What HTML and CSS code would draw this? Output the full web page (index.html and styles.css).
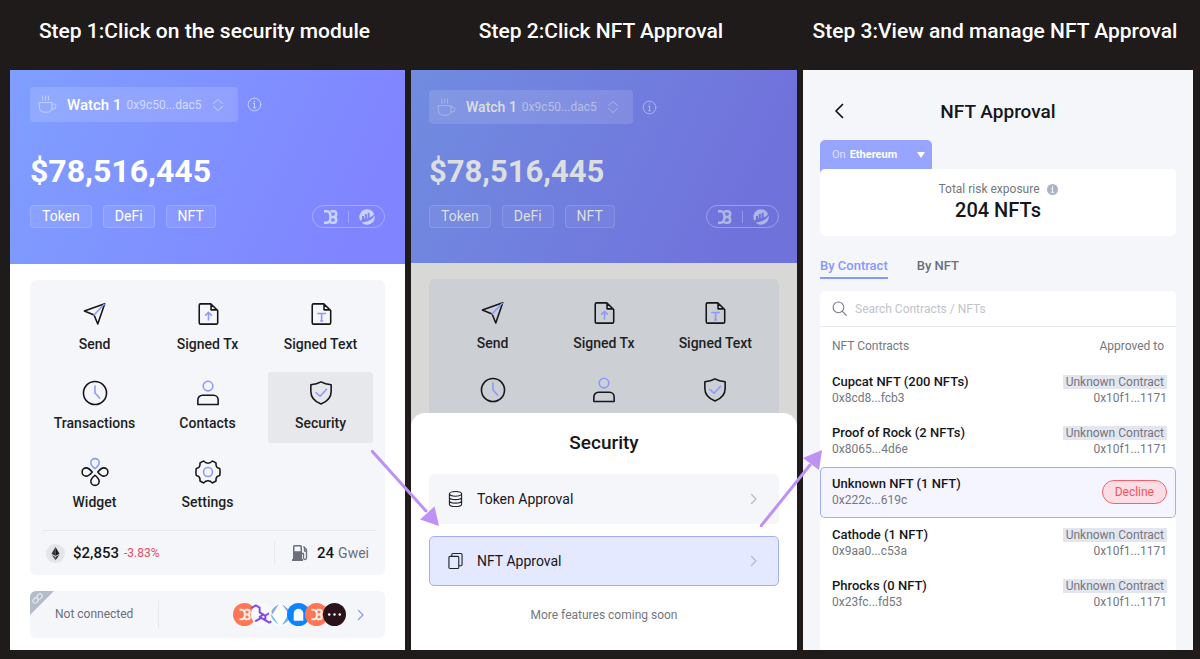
FILE: index.html
```html
<!DOCTYPE html>
<html lang="en">
<head>
    <meta charset="utf-8">
    <title>NFT Approval Guide</title>
    <link rel="stylesheet" href="styles.css">
</head>
<body>
    <!-- shared icons -->
    <svg class="sprite" width="0" height="0" aria-hidden="true">
        <symbol id="cup" viewBox="0 0 20 20"><path d="M1.500 8h13.200v5.500a4.500 4.500 0 0 1-4.500 4.500H6a4.500 4.500 0 0 1-4.500-4.500zM14.700 9.500h2.300a1.800 1.800 0 0 1 1.800 1.800v.7a2.800 2.800 0 0 1-2.800 2.800h-1.500M5 1c-1 1.500 1 2.500 0 4.500M8 1c-1 1.500 1 2.500 0 4.500M11 1c-1 1.500 1 2.500 0 4.500"/></symbol>
        <symbol id="updown" viewBox="0 0 12 14"><path d="M1.500 5.500 6 1.500l4.500 4M1.500 8.500l4.500 4 4.500-4"/></symbol>
        <symbol id="info" viewBox="0 0 16 16"><circle cx="8" cy="8" r="6.800"/><path d="M8 7v4.500M6.800 7H8M6.800 11.500h2.400M7.900 4.200v1"/></symbol>
        <symbol id="debank" viewBox="0 0 16 16"><path class="mark" d="M2 2.300h2.800C7.300 2.300 8.500 5 8.500 8s-1.200 5.700-3.700 5.700H2M8.500 2.300h3.200c3.300 0 3.300 5.200 0 5.700 3.300.5 3.300 5.700 0 5.700H8.500M8.500 8h3"/></symbol>
        <symbol id="chart" viewBox="0 0 16 16"><path fill="currentColor" stroke="none" d="M8 .3A7.700 7.700 0 0 0 1.500 12c.6-.6 1.100-1.200 1.500-1.900V7h2v2.300h.8V5h2v4.300h.8V3.700h2v4.800c2-.8 3.400-1.900 4.500-3.300A7.700 7.700 0 0 0 8 .3zM15.600 6.700C13 11.200 8.500 12.700 2.600 13.400A7.700 7.700 0 0 0 15.600 6.700z"/></symbol>
        <symbol id="send" viewBox="0 0 26 26"><path d="M1.500 9.700 23.500 1.800 16 23.800 12 14z"/><path class="hi" d="M12 14 23 2.500"/></symbol>
        <symbol id="tx" viewBox="0 0 26 26"><path d="M16 2H5a1.500 1.500 0 0 0-1.500 1.500v19A1.500 1.500 0 0 0 5 24h17a1.500 1.500 0 0 0 1.500-1.500V9.200zM16.300 2.300V8.500h6.500"/><path class="hi" d="M13.500 19.500v-8M10.300 14.300l3.200-3.200 3.200 3.200"/></symbol>
        <symbol id="text" viewBox="0 0 26 26"><path d="M16 2H5a1.500 1.500 0 0 0-1.500 1.500v19A1.500 1.500 0 0 0 5 24h17a1.500 1.500 0 0 0 1.500-1.500V9.200zM16.300 2.300V8.500h6.500"/><path class="hi" d="M9.500 12.500h8.400M13.700 12.500v8M12.700 20.500h2"/></symbol>
        <symbol id="clock" viewBox="0 0 26 26"><circle cx="13" cy="13" r="12.500"/><path class="hi" d="M13 5.500V13l5 5.500"/></symbol>
        <symbol id="contact" viewBox="0 0 26 26"><circle class="hi" cx="13" cy="5.500" r="5.200"/><path d="M2 25.500V20.500a5 5 0 0 1 5-5h12a5 5 0 0 1 5 5v5z"/></symbol>
        <symbol id="shield" viewBox="0 0 26 26"><path d="M13 1c3 1.700 7 2.700 11 3v7.500c0 6-4.500 11-11 13.500C6.500 22.500 2 17.500 2 11.500V4C6 3.700 10 2.700 13 1z"/><path class="hi" d="m7.500 12.500 4.500 4 7-7.500"/></symbol>
        <symbol id="widget" viewBox="0 0 26 26"><path class="hi" d="M13 9.500C10 7 8.500 5.500 8.500 3a4.500 4.500 0 0 1 9 0c0 2.500-1.500 4-4.500 6.500z"/><path d="M13 16.500c-3 2.500-4.500 4-4.500 6.500a4.500 4.500 0 0 0 9 0c0-2.500-1.500-4-4.500-6.500zM10 13C7.500 10 6 8.500 3.500 8.500a4.500 4.500 0 0 0 0 9c2.500 0 4-1.500 6.500-4.500zM16 13c2.500-3 4-4.500 6.500-4.500a4.500 4.500 0 0 1 0 9c-2.500 0-4-1.500-6.500-4.500z"/></symbol>
        <symbol id="gear" viewBox="0 0 26 26"><path d="M8.500 1.200c1.200 1.600 2.700 2.300 4.500 2.300s3.300-.7 4.500-2.300c1.700.5 3 1.200 4.200 2.200-.4 3.200 1 5.400 4 5.900.6 2.500.6 5 0 7.400-3 .5-4.400 2.700-4 5.900-1.200 1-2.500 1.700-4.200 2.200-1.200-1.600-2.700-2.300-4.500-2.300s-3.300.7-4.500 2.300c-1.700-.5-3-1.200-4.200-2.200.4-3.200-1-5.400-4-5.900-.6-2.500-.6-5 0-7.400 3-.5 4.400-2.700 4-5.900 1.200-1 2.500-1.700 4.200-2.200z"/><circle class="hi" cx="13" cy="13" r="4.800"/></symbol>
        <symbol id="next" viewBox="0 0 8 12"><path d="M1.500 1.500 6 6l-4.500 4.500"/></symbol>
    </svg>

    <main class="steps">
        <section class="step">
            <h2 class="step-title">Step 1:Click on the security module</h2>
            <div class="phone">
                <div class="hero">
                    <div class="account-row">
                        <button class="account">
                            <svg class="cup"><use href="#cup"/></svg>
                            <span class="account-name">Watch 1</span>
                            <span class="account-address">0x9c50...dac5</span>
                            <svg class="updown"><use href="#updown"/></svg>
                        </button>
                        <svg class="info"><use href="#info"/></svg>
                    </div>
                    <div class="balance">$78,516,445</div>
                    <div class="tags">
                        <button class="tag">Token</button>
                        <button class="tag">DeFi</button>
                        <button class="tag">NFT</button>
                        <div class="sources">
                            <svg><use href="#debank"/></svg>
                            <span class="bar"></span>
                            <svg><use href="#chart"/></svg>
                        </div>
                    </div>
                </div>
                <div class="home">
                    <div class="card">
                        <div class="tiles">
                            <button class="tile"><svg><use href="#send"/></svg>Send</button>
                            <button class="tile"><svg><use href="#tx"/></svg>Signed Tx</button>
                            <button class="tile"><svg><use href="#text"/></svg>Signed Text</button>
                            <button class="tile"><svg><use href="#clock"/></svg>Transactions</button>
                            <button class="tile"><svg><use href="#contact"/></svg>Contacts</button>
                            <button class="tile active"><svg><use href="#shield"/></svg>Security</button>
                            <button class="tile"><svg><use href="#widget"/></svg>Widget</button>
                            <button class="tile"><svg><use href="#gear"/></svg>Settings</button>
                        </div>
                        <div class="market">
                            <svg class="eth" viewBox="0 0 20 20"><circle cx="10" cy="10" r="10" fill="#e4e5ea"/><path fill="#343434" d="M10 3.200 5.800 10.200 10 12.700z"/><path fill="#1a1a1c" d="m10 3.200 4.200 7-4.200 2.500z"/><path fill="#55555a" d="M5.800 11.200 10 17v-3.300z"/><path fill="#222" d="M14.200 11.200 10 17v-3.300z"/></svg>
                            <span class="price">$2,853</span>
                            <span class="change">-3.83%</span>
                            <div class="gas">
                                <svg viewBox="0 0 16 16"><path fill="#6b6e7d" fill-rule="evenodd" d="M1 1.500A1.500 1.500 0 0 1 2.500 0h6A1.500 1.500 0 0 1 10 1.500V14h1v2H0v-2h1zM2.500 1.500v4.700h6V1.500z"/><path fill="none" stroke="#6b6e7d" stroke-width="1.300" d="M10 8.500h1.500v4.500a1.500 1.500 0 0 0 3 0V4.500L11.800 1.800M12.500 3v3h2"/></svg>
                                <b>24</b> Gwei
                            </div>
                        </div>
                    </div>
                    <div class="connect">
                        <svg class="corner" viewBox="0 0 25 25"><path fill="#b3bcc9" d="M0 0h25L0 25z"/><g fill="none" stroke="#e8ebf0" stroke-width="1.200" transform="rotate(-45 8 8)"><rect x="2" y="5.500" width="6" height="4.500" rx="2.200"/><rect x="8" y="5.500" width="6" height="4.500" rx="2.200"/></g></svg>
                        <span class="connect-state">Not connected</span>
                        <div class="coins">
                            <svg class="debank" viewBox="0 0 24 24"><circle cx="12" cy="12" r="12"/><use href="#debank" x="5" y="5" width="14" height="14"/></svg>
                            <svg viewBox="0 0 24 24"><circle cx="12" cy="12" r="12" fill="#f8f9fc"/><path fill="none" stroke="#8148e6" stroke-width="2" stroke-linejoin="round" d="M1 5 5 2.500l4 2.300v5l6 3.700M9 16.500l-3.800 2.200M15 18v-5l4-2.300 4 2.300v5L19 20.500 9 14.500l4-2.500"/></svg>
                            <svg viewBox="0 0 24 24"><circle cx="12" cy="12" r="12" fill="#fff"/><path fill="#8ea5ef" d="M10.500 1 3.500 12 2.500 9.500C2.500 6.500 5 4.500 10.500 1z"/><path fill="#79c5f3" d="M1.800 11c0 5 2.700 7.500 8.700 12L3.500 13z"/><path fill="#66b4f2" d="m13.500 23 7-11 1 2.500c0 3-2.500 5-8 8.500z"/><path fill="#8b91ea" d="M22.200 13c0-5-2.700-7.500-8.700-12l7 10z"/></svg>
                            <svg viewBox="0 0 24 24"><circle cx="12" cy="12" r="12" fill="#0a84ff"/><path fill="#fff" d="M7 18.500V11a5 5 0 0 1 10 0v7.500z"/></svg>
                            <svg class="debank" viewBox="0 0 24 24"><circle cx="12" cy="12" r="12"/><use href="#debank" x="5" y="5" width="14" height="14"/></svg>
                            <svg viewBox="0 0 24 24"><circle cx="12" cy="12" r="12" fill="#2b1419"/><g fill="#fff"><circle cx="6.500" cy="12" r="1.300"/><circle cx="12" cy="12" r="1.300"/><circle cx="17.500" cy="12" r="1.300"/></g></svg>
                        </div>
                        <svg class="next"><use href="#next"/></svg>
                    </div>
                </div>
            </div>
        </section>

        <section class="step">
            <h2 class="step-title">Step 2:Click NFT Approval</h2>
            <div class="phone dimmed">
                <div class="hero">
                    <div class="account-row">
                        <button class="account">
                            <svg class="cup"><use href="#cup"/></svg>
                            <span class="account-name">Watch 1</span>
                            <span class="account-address">0x9c50...dac5</span>
                            <svg class="updown"><use href="#updown"/></svg>
                        </button>
                        <svg class="info"><use href="#info"/></svg>
                    </div>
                    <div class="balance">$78,516,445</div>
                    <div class="tags">
                        <button class="tag">Token</button>
                        <button class="tag">DeFi</button>
                        <button class="tag">NFT</button>
                        <div class="sources">
                            <svg><use href="#debank"/></svg>
                            <span class="bar"></span>
                            <svg><use href="#chart"/></svg>
                        </div>
                    </div>
                </div>
                <div class="home">
                    <div class="card">
                        <div class="tiles">
                            <button class="tile"><svg><use href="#send"/></svg>Send</button>
                            <button class="tile"><svg><use href="#tx"/></svg>Signed Tx</button>
                            <button class="tile"><svg><use href="#text"/></svg>Signed Text</button>
                            <button class="tile"><svg><use href="#clock"/></svg></button>
                            <button class="tile"><svg><use href="#contact"/></svg></button>
                            <button class="tile"><svg><use href="#shield"/></svg></button>
                        </div>
                    </div>
                </div>
                <div class="sheet">
                    <h3>Security</h3>
                    <button class="option">
                        <svg viewBox="0 0 16 18"><ellipse cx="8" cy="3.500" rx="6.500" ry="2.500"/><path d="M1.500 3.500v11C1.500 16 4.400 17 8 17s6.500-1 6.500-2.500v-11M1.500 7.200c0 1.400 2.900 2.500 6.500 2.500s6.500-1.100 6.500-2.500M1.500 10.900c0 1.400 2.900 2.500 6.500 2.500s6.500-1.100 6.500-2.500"/></svg>
                        Token Approval
                        <svg class="next"><use href="#next"/></svg>
                    </button>
                    <button class="option selected">
                        <svg viewBox="0 0 16 18"><rect x="1" y="4" width="10.500" height="13" rx="1.200"/><path d="M4 3.500V2.200A1.200 1.200 0 0 1 5.200 1h8.600A1.200 1.200 0 0 1 15 2.200v10.600a1.200 1.200 0 0 1-1.200 1.200h-2"/></svg>
                        NFT Approval
                        <svg class="next"><use href="#next"/></svg>
                    </button>
                    <p>More features coming soon</p>
                </div>
                <svg class="arrow arrow-in" viewBox="0 0 68 76"><path stroke="#bd92f4" stroke-width="3" d="m1 1 54 60"/><path fill="#bd92f4" d="M68 76 49 69.500 63.500 56.500z"/></svg>
                <svg class="arrow arrow-out" viewBox="0 0 62 77"><path stroke="#bd92f4" stroke-width="3" d="M1 76 50 15"/><path fill="#bd92f4" d="M62 0 43 8l16 12z"/></svg>
            </div>
        </section>

        <section class="step">
            <h2 class="step-title">Step 3:View and manage NFT Approval</h2>
            <div class="phone approvals">
                <header class="bar-top">
                    <button class="back" aria-label="Back"><svg viewBox="0 0 10 16"><path d="M8.500 1.500 2 8l6.500 6.500"/></svg></button>
                    <h1>NFT Approval</h1>
                </header>
                <div class="network">
                    <label for="network">On</label>
                    <select id="network"><option>Ethereum</option></select>
                    <svg viewBox="0 0 8 6"><path d="M0 0h8L4 6z"/></svg>
                </div>
                <div class="risk">
                    <div class="risk-label">Total risk exposure
                        <svg viewBox="0 0 12 12"><circle cx="6" cy="6" r="6" fill="#a9b4c6"/><path stroke="#f2f5f9" d="M6 2.500v1.300M6 5v4M4.800 5.300H6M4.500 9h3"/></svg>
                    </div>
                    <div class="risk-total">204 NFTs</div>
                </div>
                <nav class="tabs">
                    <button class="tab active">By Contract</button>
                    <button class="tab">By NFT</button>
                </nav>
                <div class="list">
                    <label class="search">
                        <svg viewBox="0 0 14 14"><circle cx="6" cy="6" r="5"/><path d="m9.700 9.700 3.600 3.600"/></svg>
                        <input type="text" aria-label="Search" placeholder="Search Contracts / NFTs">
                    </label>
                    <table>
                        <thead>
                            <tr><th>NFT Contracts</th><th>Approved to</th></tr>
                        </thead>
                        <tbody>
                            <tr><td><b>Cupcat NFT (200 NFTs)</b>0x8cd8...fcb3</td><td><span class="unknown">Unknown Contract</span>0x10f1...1171</td></tr>
                            <tr><td><b>Proof of Rock (2 NFTs)</b>0x8065...4d6e</td><td><span class="unknown">Unknown Contract</span>0x10f1...1171</td></tr>
                            <tr class="selected"><td><b>Unknown NFT (1 NFT)</b>0x222c...619c</td><td><button class="decline">Decline</button></td></tr>
                            <tr><td><b>Cathode (1 NFT)</b>0x9aa0...c53a</td><td><span class="unknown">Unknown Contract</span>0x10f1...1171</td></tr>
                            <tr><td><b>Phrocks (0 NFT)</b>0x23fc...fd53</td><td><span class="unknown">Unknown Contract</span>0x10f1...1171</td></tr>
                        </tbody>
                    </table>
                </div>
            </div>
        </section>
    </main>
</body>
</html>
```

FILE: styles.css
```css
* { box-sizing: border-box; }
body { margin: 0; background-color: #1f1b1a; color: #15171c; font-family: Roboto, sans-serif; font-size: 14px; }
h1, h2, h3, p { margin: 0; font-weight: 500; }
button, input, select { font: inherit; color: inherit; background: none; border: none; padding: 0; margin: 0; }
button { cursor: pointer; }
svg { display: block; flex: none; fill: none; stroke-linecap: round; stroke-linejoin: round; }
.sprite { position: absolute; }

.steps {
    display: grid; grid-template-columns: 395fr 386fr 390fr; column-gap: 6px;
    min-height: 100vh; padding: 0 7px 9px 10px;
}
.step { display: flex; flex-direction: column; min-width: 0; }
.step-title {
    height: 70px; padding: 17px 6px 0 0; line-height: 28px; font-size: 21px;
    color: #fff; text-align: center; white-space: nowrap;
}
.phone { flex: 1; display: flex; flex-direction: column; position: relative; background-color: #fff; }

/* balance header */
.hero { padding: 17px 20px 36px; background: linear-gradient(115deg, #7f9fff, #8085ff 85%); color: #fff; }
.hero svg { stroke: currentColor; color: #c9d3ff; }
.account-row { display: flex; align-items: center; gap: 9px; }
.account {
    display: flex; align-items: center; height: 35px; padding: 0 14px 0 8px;
    border-radius: 4px; background-color: rgba(255,255,255,0.14);
}
.account .cup { width: 19px; height: 19px; margin-right: 10px; }
.account-name { font-size: 15px; font-weight: 500; margin-right: 5px; }
.account-address { font-size: 12px; color: #d2daff; margin-right: 10px; }
.account .updown { width: 12px; height: 14px; }
.info { width: 15px; height: 15px; }
.balance { padding: 29px 0 14px; line-height: 40px; font-size: 32px; font-weight: 700; }
.tags { display: flex; gap: 11px; }
.tag {
    height: 23px; padding: 0 11px; line-height: 21px; border: 1px solid rgba(255,255,255,0.16);
    border-radius: 4px; background-color: rgba(255,255,255,0.08);
}
.sources {
    display: flex; align-items: center; gap: 10px; margin-left: auto; padding: 0 9px; height: 23px;
    border: 1px solid rgba(255,255,255,0.3); border-radius: 12px;
}
.sources svg { width: 16px; height: 16px; }
.sources .bar { width: 1px; height: 12px; background-color: rgba(255,255,255,0.25); }
.mark { stroke-width: 2.6; stroke-linecap: butt; }

/* home tiles */
.home { padding: 16px 20px 12px; }
.card { border-radius: 6px; background-color: #f5f6fa; }
.tiles { display: grid; grid-template-columns: repeat(3, 1fr); gap: 8px; padding: 13px 12px 8px; }
.tile {
    display: flex; flex-direction: column; align-items: center; gap: 8px; height: 71px; padding-top: 9px;
    line-height: 20px; font-weight: 500; border-radius: 3px; color: #1d1f24;
}
.tile svg { width: 26px; height: 24px; stroke: #15161a; stroke-width: 1.7; overflow: visible; }
.tile symbol { overflow: visible; }
.sprite symbol { overflow: visible; }
.tile.active { background-color: #e7e8eb; }
.hi { stroke: #8c97ff; }
.market { display: flex; align-items: center; height: 45px; margin: 0 8px 0 12px; padding: 0 8px 0 4px; border-top: 1px solid #e5e9ef; }
.eth { width: 19px; height: 19px; }
.price { margin-left: 8px; font-size: 15px; font-weight: 500; }
.change { margin-left: 5px; font-size: 12px; color: #e34b62; }
.gas { display: flex; align-items: center; gap: 4px; margin-left: auto; padding-left: 17px; border-left: 1px solid #e5e9ef; line-height: 24px; color: #6b6e7d; }
.gas svg { width: 16px; height: 16px; margin-right: 5px; }
.gas b { font-size: 15px; font-weight: 500; color: #15171c; }
.connect {
    display: flex; align-items: center; position: relative; height: 47px; margin-top: 16px; padding: 0 20px 0 25px;
    border-radius: 6px; background-color: #f5f6fa; overflow: hidden;
}
.corner { position: absolute; left: 0; top: 0; width: 24px; height: 24px; }
.connect-state { padding-right: 25px; line-height: 27px; border-right: 1px solid #e5e9ef; font-size: 12px; color: #6b6e7d; }
.coins { display: flex; margin-left: auto; }
.coins svg { width: 23px; height: 23px; }
.coins svg + svg { margin-left: -5px; }
.coins .debank { stroke: #f7eee9; }
.debank circle { fill: #ff7655; stroke: none; }
.next { width: 8px; height: 12px; stroke: #8c9cf0; stroke-width: 1.3; }
.connect .next { margin-left: 11px; }

/* home screen behind the sheet */
.dimmed { background-color: #d8d8d7; }
.dimmed .hero { padding: 20px 18px 35px; background: linear-gradient(115deg, #708ce0, #7072dc 85%); color: #dcdedf; }
.dimmed .hero svg { color: #adb6e4; }
.dimmed .account { height: 34px; background-color: rgba(255,255,255,0.12); }
.dimmed .account-name { font-size: 14px; }
.dimmed .account-address { color: #b7c0e6; }
.dimmed .balance { padding: 28px 0 13px; font-size: 31px; }
.dimmed .tag { padding: 0 11px; border-color: rgba(255,255,255,0.12); background-color: rgba(255,255,255,0.05); }
.dimmed .home { padding: 16px 18px 0; }
.dimmed .card { background-color: #cccfd4; }
.dimmed .tiles { gap: 6px 8px; }
.dimmed .hi { stroke: #7a83dd; }
.sheet {
    position: absolute; left: 0; right: 0; bottom: 0; padding: 16px 18px 24px; text-align: center;
    border-radius: 14px 14px 0 0; background-color: #fff;
}
.sheet h3 { line-height: 28px; margin-bottom: 17px; font-size: 19px; }
.option {
    display: flex; align-items: center; gap: 14px; width: 100%; height: 50px; margin-bottom: 12px; padding: 0 20px 0 18px;
    border: 1px solid #f5f6fa; border-radius: 5px; background-color: #f5f6fa;
}
.option svg { width: 15px; height: 18px; stroke: #22242b; stroke-width: 1.2; }
.option .next { width: 8px; height: 12px; margin-left: auto; stroke: #b5b9c6; }
.option.selected { background-color: #e5e9ff; border-color: #a3aff0; }
.sheet p { padding-top: 6px; line-height: 22px; font-size: 12px; font-weight: 400; color: #74777f; }
.arrow { position: absolute; z-index: 1; }
.arrow-in { width: 68px; height: 76px; left: -40px; bottom: 124px; }
.arrow-out { width: 62px; height: 77px; right: -25px; bottom: 123px; }

/* approval list */
.approvals { padding: 0 17px; background-color: #f5f6fa; }
.bar-top { display: flex; align-items: center; height: 70px; padding-top: 12px; }
.bar-top h1 { flex: 1; padding-right: 38px; font-size: 19px; text-align: center; }
.back { width: 38px; padding-left: 14px; }
.back svg { width: 10px; height: 16px; stroke: #111; stroke-width: 1.7; }
.network {
    display: flex; align-items: center; align-self: flex-start; width: 112px; height: 35px; padding: 0 7px 6px 12px;
    margin-bottom: -6px; border-radius: 5px 5px 0 0; background-color: #98a5ff; color: #fff; font-size: 11px;
}
.network label { margin-right: 4px; color: #dde1ff; }
.network select { flex: 1; appearance: none; font-weight: 700; }
.network svg { width: 8px; height: 6px; fill: #fff; }
.risk { position: relative; height: 67px; padding-top: 11px; border-radius: 5px; background-color: #fff; text-align: center; }
.risk-label { display: flex; justify-content: center; align-items: center; gap: 7px; line-height: 18px; font-size: 12px; color: #74777f; }
.risk-label svg { width: 11px; height: 11px; }
.risk-total { line-height: 25px; font-size: 20px; font-weight: 500; }
.tabs { display: flex; gap: 29px; padding: 20px 0 12px; }
.tab { line-height: 20px; padding-bottom: 1px; border-bottom: 2px solid transparent; font-size: 13px; font-weight: 500; color: #6b6e7d; }
.tab.active { color: #8697ff; border-color: #8697ff; }
.list { flex: 1; border-radius: 5px 5px 0 0; background-color: #fff; }
.search { display: flex; align-items: center; gap: 8px; height: 36px; padding: 0 12px; border-bottom: 1px solid #e8eaee; }
.search svg { width: 15px; height: 15px; stroke: #777c87; }
.search input { flex: 1; min-width: 0; outline: none; font-size: 12px; }
.search input::placeholder { color: #c0c4cb; }
table { width: 100%; border-spacing: 0; font-size: 12px; line-height: 16px; color: #74777f; }
th { height: 38px; padding: 0 12px; font-weight: 400; text-align: left; }
td { height: 51px; padding: 0 9px 1px 12px; border: 1px solid transparent; border-width: 1px 0; }
td b { display: block; font-size: 13px; font-weight: 500; color: #15171c; }
th:last-child, td:last-child { text-align: right; }
.unknown { display: block; width: fit-content; margin-left: auto; padding: 0 3px; line-height: 14px; margin-bottom: 1px; background-color: #e3e6ef; }
.selected td { border-color: #a3aff0; background-color: #f4f5ff; }
.selected td:first-child { border-left-width: 1px; padding-left: 11px; border-radius: 5px 0 0 5px; }
.selected td:last-child { border-right-width: 1px; padding-right: 8px; border-radius: 0 5px 5px 0; }
.decline { height: 24px; padding: 0 12px; border: 1px solid #f2626e; border-radius: 12px; background-color: #fbdde3; color: #ee5560; }
```
